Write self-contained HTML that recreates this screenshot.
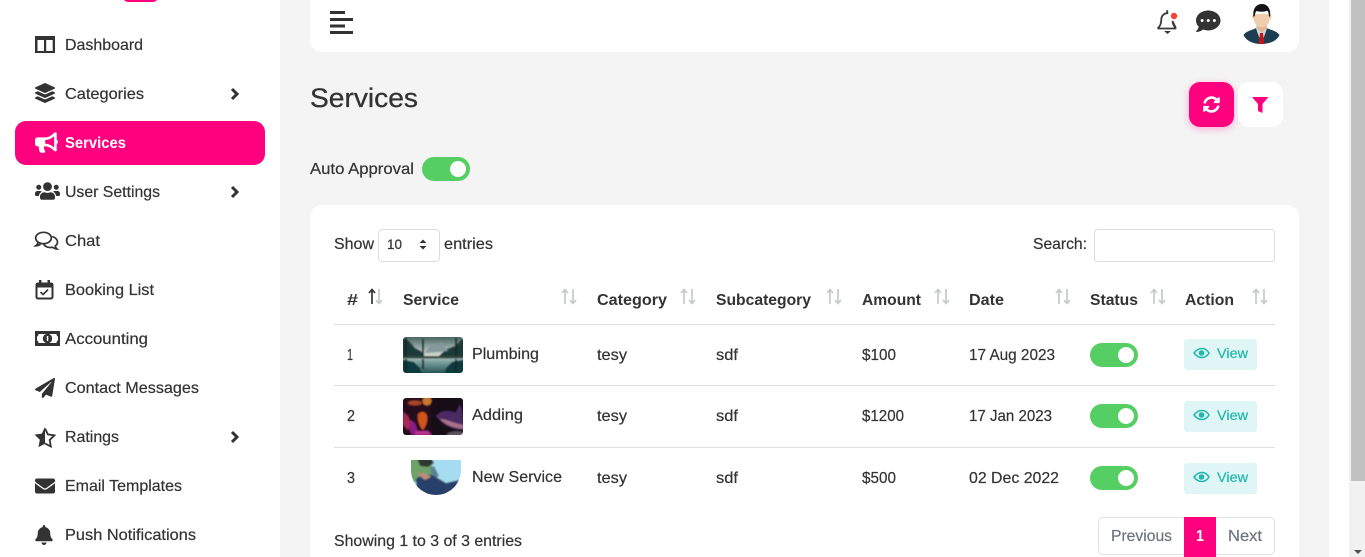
<!DOCTYPE html>
<html><head><meta charset="utf-8"><title>Services</title>
<style>
html,body{margin:0;padding:0;width:1365px;height:557px;overflow:hidden;background:#f4f4f4}
svg{display:block}
text{font-family:"Liberation Sans",sans-serif;font-size:16px;fill:#333;stroke:#333;stroke-width:.2}
.h{font-weight:700;fill:#333;stroke:none}
.p{fill:#6c757d;stroke:#6c757d}
</style></head><body>
<svg width="1365" height="557" viewBox="0 0 1365 557" xmlns="http://www.w3.org/2000/svg">
<defs>
<linearGradient id="lake" x1="0" y1="0" x2="0" y2="1"><stop offset="0" stop-color="#33504f"/><stop offset=".3" stop-color="#8fa5a0"/><stop offset=".5" stop-color="#d4dad0"/><stop offset=".65" stop-color="#7fa5a2"/><stop offset="1" stop-color="#0f3f45"/></linearGradient>
<clipPath id="c1"><rect x="403" y="337" width="60" height="36" rx="3"/></clipPath>
<clipPath id="c2"><rect x="403" y="398" width="60" height="37" rx="3"/></clipPath>
<clipPath id="c3"><path d="M411 460H461V470A25 25 0 0 1 411 470Z"/></clipPath>
<filter id="sh" x="-30%" y="-30%" width="160%" height="160%"><feGaussianBlur stdDeviation="4"/></filter>
<filter id="bl" x="-10%" y="-10%" width="120%" height="120%"><feGaussianBlur stdDeviation=".7"/></filter>
</defs>

<!-- page -->
<rect width="1365" height="557" fill="#f4f4f4"/>
<rect x="1329" width="20" height="557" fill="#fff"/>
<rect x="1349" width="16" height="557" fill="#f1f1f1"/>
<rect x="1351" width="14" height="481" fill="#c1c1c1"/>
<path d="M1354 550h8l-4 4z" fill="#505050"/>

<!-- sidebar -->
<rect width="280" height="557" fill="#fff"/>
<rect x="123" y="-8" width="35" height="10" rx="5" fill="#ff007f"/>
<rect x="15" y="121" width="250" height="44" rx="11" fill="#ff007f"/>

<!-- sidebar icons -->
<g fill="#333">
<path fill-rule="evenodd" d="M35 36h20v17H35zM37.500 40v11h6.500V40zM46.200 40v11h6.500V40z"/>
<svg x="35" y="83" width="20" height="20" viewBox="0 0 512 512"><path d="M12.410 148.020l232.940 105.670c6.800 3.090 14.490 3.090 21.290 0l232.940-105.670c16.550-7.510 16.550-32.520 0-40.030L266.650 2.310a25.607 25.607 0 0 0-21.290 0L12.410 107.980c-16.550 7.510-16.550 32.530 0 40.040zm487.180 88.280l-58.090-26.330-161.640 73.270c-7.560 3.430-15.590 5.170-23.860 5.170s-16.290-1.740-23.860-5.170L70.510 209.970l-58.100 26.330c-16.550 7.500-16.550 32.500 0 40l232.940 105.590c6.800 3.080 14.490 3.080 21.290 0L499.590 276.300c16.550-7.500 16.550-32.500 0-40zm0 127.800l-57.870-26.230-161.860 73.370c-7.560 3.430-15.590 5.170-23.860 5.170s-16.290-1.740-23.860-5.170L70.290 337.870 12.410 364.100c-16.550 7.500-16.550 32.500 0 40l232.940 105.590c6.800 3.080 14.490 3.080 21.290 0L499.590 404.100c16.550-7.500 16.550-32.500 0-40z"/></svg>
<svg x="35" y="132" width="23" height="21" viewBox="0 0 576 512"><path fill="#fff" d="M576 240c0-23.630-12.950-44.040-32-55.120V32.010C544 23.260 537.020 0 512 0c-7.120 0-14.190 2.380-19.980 7.020l-85.030 68.030C364.280 109.190 310.660 128 256 128H64c-35.350 0-64 28.650-64 64v96c0 35.350 28.650 64 64 64h33.700c-1.390 10.480-2.180 21.140-2.180 32 0 39.770 9.260 77.350 25.560 110.940 5.190 10.690 16.520 17.060 28.400 17.060h74.280c26.050 0 41.690-29.840 25.900-50.560-16.400-21.520-26.150-48.360-26.150-77.440 0-11.110 1.620-21.790 4.410-32H256c54.660 0 108.280 18.810 150.980 52.950l85.030 68.030a32.023 32.023 0 0 0 19.980 7.020c24.920 0 32-22.780 32-32V295.130C563.050 284.040 576 263.630 576 240zm-96 141.420l-33.050-26.440C392.950 311.780 325.120 288 256 288v-96c69.120 0 136.950-23.780 190.950-66.980L480 98.580v282.840z"/></svg>
<svg x="35" y="181" width="25" height="20" viewBox="0 0 640 512"><path d="M96 224c35.300 0 64-28.700 64-64s-28.700-64-64-64-64 28.700-64 64 28.700 64 64 64zm448 0c35.300 0 64-28.700 64-64s-28.700-64-64-64-64 28.700-64 64 28.700 64 64 64zm32 32h-64c-17.600 0-33.500 7.100-45.100 18.600 40.300 22.100 68.900 62 75.100 109.400h66c17.700 0 32-14.300 32-32v-32c0-35.300-28.700-64-64-64zm-256 0c61.900 0 112-50.100 112-112S381.900 32 320 32 208 82.100 208 144s50.100 112 112 112zm76.800 32h-8.300c-20.800 10-43.900 16-68.500 16s-47.600-6-68.500-16h-8.300C179.600 288 128 339.600 128 403.200V432c0 26.500 21.500 48 48 48h288c26.500 0 48-21.500 48-48v-28.800c0-63.600-51.600-115.200-115.200-115.200zm-223.700-13.400C161.500 263.100 145.600 256 128 256H64c-35.300 0-64 28.700-64 64v32c0 17.700 14.300 32 32 32h65.900c6.300-47.400 34.900-87.300 75.200-109.400z"/></svg>
<!-- chat outline -->
<g fill="none" stroke="#333" stroke-width="1.700">
<ellipse cx="43.500" cy="238" rx="7.800" ry="5.700" fill="#fff"/>
<path d="M38 242.500c-.3 1.500-1.200 2.500-2.300 3.300 1.800 0 3.500-.6 4.800-1.600"/>
<path d="M52.200 236.500c3.200 1 5.300 3.200 5.300 5.500 0 1.600-.9 3-2.300 4 .2 1.300.9 2.200 1.800 3-1.800-.1-3.300-.8-4.300-1.700-3.500.6-7.300-.4-9-2.800"/>
</g>
<!-- calendar -->
<g fill="none" stroke="#333" stroke-width="2"><rect x="36.500" y="283.500" width="16" height="15" rx="1.500"/></g>
<path d="M36 283h17v4.500H36zM39 280h2.500v4H39zM47.500 280H50v4h-2.500z"/>
<path d="M40.500 292l2.600 2.500 5-5" fill="none" stroke="#333" stroke-width="1.600"/>
<!-- money -->
<path fill-rule="evenodd" d="M35 331h25v15H35zM38.500 334c0 1.500-.8 2.300-1.500 2.500v4c.8.200 1.500 1 1.500 2.500h18c0-1.500.7-2.300 1.500-2.500v-4c-.8-.2-1.500-1-1.500-2.500z"/>
<circle cx="47.500" cy="338.500" r="4.700"/><rect x="46.800" y="336" width="1.500" height="5" fill="#fff"/>
<svg x="35" y="378" width="20" height="20" viewBox="0 0 512 512"><path d="M476 3.200L12.500 270.600c-18.100 10.400-15.800 35.600 2.200 43.200L121 358.400l287.300-253.200c5.500-4.900 13.300 2.600 8.600 8.300L176 407v80.500c0 23.600 28.500 32.900 42.500 15.800L282 426l124.600 52.200c14.200 6 30.400-2.900 33-18.200l72-432C515 7.800 493.300-6.800 476 3.200z"/></svg>
<!-- star half -->
<path d="M45 427l-3.200 6.600-7.300 1 5.300 5.200-1.300 7.300 6.500-3.400z"/>
<path d="M45 428.500l2.900 5.900 6.500 1-4.700 4.600 1.100 6.500-5.800-3" fill="none" stroke="#333" stroke-width="1.800"/>
<svg x="35" y="476" width="20" height="20" viewBox="0 0 512 512"><path d="M502.300 190.800c3.900-3.100 9.700-.2 9.700 4.700V400c0 26.500-21.500 48-48 48H48c-26.500 0-48-21.500-48-48V195.600c0-5 5.700-7.800 9.700-4.700 22.400 17.400 52.100 39.500 154.100 113.600 21.100 15.400 56.700 47.800 92.200 47.600 35.700.3 72-32.800 92.300-47.600 102-74.100 131.600-96.300 154-113.700zM256 320c23.200.4 56.600-29.200 73.400-41.400 132.700-96.300 142.800-104.700 173.400-128.700 5.800-4.500 9.200-11.500 9.200-18.900v-19c0-26.500-21.500-48-48-48H48C21.500 64 0 85.500 0 112v19c0 7.400 3.400 14.300 9.200 18.900 30.600 23.900 40.700 32.400 173.400 128.700 16.800 12.200 50.200 41.800 73.400 41.400z"/></svg>
<svg x="35" y="525" width="18" height="20" viewBox="0 0 448 512"><path d="M224 512c35.320 0 63.970-28.650 63.970-64H160.030c0 35.350 28.650 64 63.970 64zm215.390-149.710c-19.320-20.760-55.470-51.990-55.470-154.290 0-77.700-54.480-139.900-127.940-155.160V32c0-17.670-14.320-32-31.980-32s-31.980 14.330-31.980 32v20.840C118.560 68.100 64.080 130.300 64.080 208c0 102.300-36.150 133.530-55.470 154.290-6 6.450-8.660 14.160-8.610 21.710.11 16.400 12.980 32 32.100 32h383.800c19.120 0 32-15.600 32.100-32 .05-7.550-2.610-15.270-8.610-21.710z"/></svg>
<g fill="none" stroke="#333" stroke-width="3"><path d="M232 89l5 5-5 5"/><path d="M232 187l5 5-5 5"/><path d="M232 432l5 5-5 5"/></g>
</g>

<!-- sidebar labels -->
<text x="65" y="50" textLength="78" lengthAdjust="spacingAndGlyphs">Dashboard</text>
<text x="65" y="99" textLength="79" lengthAdjust="spacingAndGlyphs">Categories</text>
<text x="65" y="148" textLength="61" lengthAdjust="spacingAndGlyphs" font-weight="700" style="fill:#fff;stroke:none">Services</text>
<text x="65" y="197" textLength="95" lengthAdjust="spacingAndGlyphs">User Settings</text>
<text x="65" y="246" textLength="35" lengthAdjust="spacingAndGlyphs">Chat</text>
<text x="65" y="295" textLength="89" lengthAdjust="spacingAndGlyphs">Booking List</text>
<text x="65" y="344" textLength="83" lengthAdjust="spacingAndGlyphs">Accounting</text>
<text x="65" y="393" textLength="134" lengthAdjust="spacingAndGlyphs">Contact Messages</text>
<text x="65" y="442" textLength="54" lengthAdjust="spacingAndGlyphs">Ratings</text>
<text x="65" y="491" textLength="117" lengthAdjust="spacingAndGlyphs">Email Templates</text>
<text x="65" y="540" textLength="131" lengthAdjust="spacingAndGlyphs">Push Notifications</text>

<!-- top bar -->
<path d="M310 0H1299V40A12 12 0 0 1 1287 52H322A12 12 0 0 1 310 40Z" fill="#fff"/>
<g fill="#333"><rect x="330" y="11" width="15" height="3"/><rect x="330" y="18" width="23" height="3"/><rect x="330" y="24.500" width="15" height="3"/><rect x="330" y="31" width="23" height="3"/></g>
<!-- bell outline -->
<path d="M1157.500 28.500c2.300-1.800 3.800-4 3.800-9 0-3.600 2.500-6 5.700-6.300.4 0 .8 0 1.200.1M1172.500 21c.4 3.500 1.900 5.800 3.500 7.500zM1157.500 28.500H1176" fill="none" stroke="#3a3a3a" stroke-width="1.800"/>
<path d="M1167.200 13.200v-3" fill="none" stroke="#3a3a3a" stroke-width="1.800"/>
<path d="M1164 31h7l-3.500 3z" fill="#3a3a3a"/>
<circle cx="1174" cy="16" r="3.200" fill="#f44336"/>
<svg x="1196" y="9" width="24.500" height="24.500" viewBox="0 0 512 512"><path fill="#333" d="M256 32C114.600 32 0 125.100 0 240c0 49.600 21.400 95 57 130.700C44.500 421.100 2.700 466 2.200 466.500c-2.200 2.300-2.800 5.700-1.500 8.700S4.800 480 8 480c66.300 0 116-31.800 140.600-51.400 32.700 12.300 69 19.400 107.400 19.400 141.400 0 256-93.100 256-208S397.400 32 256 32zM128 272c-17.700 0-32-14.300-32-32s14.300-32 32-32 32 14.300 32 32-14.300 32-32 32zm128 0c-17.700 0-32-14.300-32-32s14.300-32 32-32 32 14.300 32 32-14.300 32-32 32zm128 0c-17.700 0-32-14.300-32-32s14.300-32 32-32 32 14.300 32 32-14.300 32-32 32z"/></svg>
<!-- avatar -->
<path d="M1243.500 35c2-3 6-4.500 10-5.800l4-1.700h8l4 1.700c4 1.300 8 2.800 10 5.800-2.500 5.500-9 9-18 9s-15.500-3.500-18-9z" fill="#1c3d52"/>
<path d="M1255.500 27l6 17 6-17-2-3h-8z" fill="#d3d6d7"/>
<path d="M1260 33h3l1.200 11h-5.400z" fill="#c4161c"/>
<path d="M1257 21h9.500v7l-4.700 5-4.800-5z" fill="#e2b48f"/>
<ellipse cx="1253.500" cy="17" rx="1.300" ry="2.200" fill="#eec5a4"/><ellipse cx="1270" cy="17" rx="1.300" ry="2.200" fill="#eec5a4"/>
<path d="M1254 14h15.500v6c0 3.500-4 7.500-7.750 7.500S1254 23.500 1254 20z" fill="#f0cdaf"/>
<path d="M1253.500 17c-1.200-8 2.500-13 8.300-13s9.500 5 8.200 13l-1.100-1c0-2-.5-4-1.500-5.200-3.500 1.200-7.500 1.200-11 .2-1 1.200-1.500 3-1.600 5z" fill="#141414"/>

<!-- title -->
<text x="310" y="107" textLength="108" lengthAdjust="spacingAndGlyphs" style="font-size:27px;stroke-width:.3">Services</text>
<rect x="1189" y="84" width="45" height="45" rx="11" fill="#ff007f" opacity=".3" filter="url(#sh)"/>
<rect x="1189" y="82" width="45" height="45" rx="11" fill="#ff007f"/>
<rect x="1238" y="82" width="45" height="45" rx="11" fill="#fff"/>
<svg x="1203" y="96" width="17" height="17" viewBox="0 0 512 512"><path fill="#fff" d="M370.720 133.280C339.458 104.008 298.888 87.962 255.848 88c-77.458.068-144.328 53.178-162.791 126.850-1.344 5.363-6.122 9.150-11.651 9.150H24.103c-7.498 0-13.194-6.807-11.807-14.176C33.933 94.924 134.813 8 256 8c66.448 0 126.791 26.136 171.315 68.685L463.030 40.970C478.149 25.851 504 36.559 504 57.941V192c0 13.255-10.745 24-24 24H345.941c-21.382 0-32.090-25.851-16.971-40.971l41.750-41.749zM32 296h134.059c21.382 0 32.090 25.851 16.971 40.971l-41.750 41.750c31.262 29.273 71.835 45.319 114.876 45.280 77.418-.07 144.315-53.144 162.787-126.849 1.344-5.363 6.122-9.150 11.651-9.150h57.304c7.498 0 13.194 6.807 11.807 14.176C478.067 417.076 377.187 504 256 504c-66.448 0-126.791-26.136-171.315-68.685L48.970 471.030C33.851 486.149 8 475.441 8 454.059V320c0-13.255 10.745-24 24-24z"/></svg>
<path d="M1252 97h16.500l-6 7v9l-4.500-2v-7z" fill="#ff007f"/>

<!-- auto approval -->
<text x="310" y="174" textLength="104" lengthAdjust="spacingAndGlyphs">Auto Approval</text>
<rect x="422" y="157" width="48" height="24" rx="12" fill="#55ce63"/><circle cx="458" cy="169" r="8" fill="#fff"/>

<!-- card -->
<path d="M322 205H1287A12 12 0 0 1 1299 217V557H310V217A12 12 0 0 1 322 205Z" fill="#fff"/>
<text x="334" y="249" textLength="40" lengthAdjust="spacingAndGlyphs">Show</text>
<rect x="378.500" y="229.500" width="61" height="32" rx="4" fill="#fff" stroke="#dcdcdc"/>
<text x="387" y="249" textLength="15" lengthAdjust="spacingAndGlyphs" style="font-size:14px">10</text>
<path d="M419.500 243l3.500-3.500 3.500 3.500zM419.500 246l3.500 3.500 3.500-3.500z" fill="#333"/>
<text x="444" y="249" textLength="49" lengthAdjust="spacingAndGlyphs">entries</text>
<text x="1033" y="249" textLength="54" lengthAdjust="spacingAndGlyphs">Search:</text>
<rect x="1094.500" y="229.500" width="180" height="32" rx="3" fill="#fff" stroke="#dcdcdc"/>

<!-- table head -->
<text x="347" y="305" class="h" textLength="11" lengthAdjust="spacingAndGlyphs">#</text>
<text x="403" y="305" class="h" textLength="56" lengthAdjust="spacingAndGlyphs">Service</text>
<text x="597" y="305" class="h" textLength="70" lengthAdjust="spacingAndGlyphs">Category</text>
<text x="716" y="305" class="h" textLength="95" lengthAdjust="spacingAndGlyphs">Subcategory</text>
<text x="862" y="305" class="h" textLength="59" lengthAdjust="spacingAndGlyphs">Amount</text>
<text x="969" y="305" class="h" textLength="35" lengthAdjust="spacingAndGlyphs">Date</text>
<text x="1090" y="305" class="h" textLength="48" lengthAdjust="spacingAndGlyphs">Status</text>
<text x="1185" y="305" class="h" textLength="49" lengthAdjust="spacingAndGlyphs">Action</text>

<!-- sort arrows -->
<g fill="none" stroke-width="1.700">
<g stroke="#333"><path d="M372 304v-14M369 293l3-3.500 3 3.500"/></g>
<g stroke="#c6c9cc">
<path d="M379 289v14M376 300l3 3.500 3-3.500"/>
<g id="sa"><path d="M565 304v-14M562 293l3-3.500 3 3.500M573 289v14M570 300l3 3.500 3-3.500"/></g>
<use href="#sa" x="119"/><use href="#sa" x="265"/><use href="#sa" x="373"/><use href="#sa" x="494"/><use href="#sa" x="589"/><use href="#sa" x="691"/>
</g></g>

<!-- rows lines -->
<g fill="#e0e0e3"><rect x="334" y="324" width="941" height="1"/><rect x="334" y="385" width="941" height="1"/><rect x="334" y="447" width="941" height="1"/></g>

<!-- thumbnail 1 -->
<g clip-path="url(#c1)"><g filter="url(#bl)">
<rect x="400" y="334" width="66" height="42" fill="url(#lake)"/>
<path d="M400 338l6 1 4 3 5 6 6 3 3 5H400zM466 338l-5 2-6 6-8 3-5 4-3 3H466z" fill="#1f3a38"/>
<path d="M425 353l6-8 5 1 5-4 7 9z" fill="#84999c"/>
<path d="M405 338h2v18h-2zM422 339h2v17h-2zM455 338h2v18h-2z" fill="#16282a"/>
<path d="M400 356h66v2.500H400z" fill="#33453c"/>
<path d="M400 359l14 3 6 6 2 8H400zM466 359l-14 3-6 6-2 8H466z" fill="#0f3a40"/>
<path d="M405 359h2v12h-2zM422 359h2v10h-2zM455 359h2v12h-2z" fill="#16282a"/>
</g></g>
<!-- thumbnail 2 -->
<g clip-path="url(#c2)"><g filter="url(#bl)">
<rect x="400" y="395" width="66" height="43" fill="#161018"/>
<rect x="400" y="395" width="31" height="43" fill="#26101c"/>
<ellipse cx="427" cy="401" rx="4.500" ry="4.500" fill="#c9742c"/>
<ellipse cx="415" cy="403" rx="7" ry="2.500" fill="#a8442c"/>
<path d="M418 414c4-4 8-2 9 2 1 5-1 10-4 14-3-2-6-10-5-16z" fill="#d0541a"/>
<path d="M403 412l5 4 3 8-3 6-5-5z" fill="#a82a50"/>
<path d="M410 420l5 3 3 9-6 3-3-6z" fill="#8d1f82"/>
<path d="M416 431l12 0 4 4h-18z" fill="#b83090"/>
<path d="M436 416c5-6 14-6 19-3 3-2 3-7 5-8 3 6 3 16 3 24-8 2-19-3-27-13z" fill="#4c2964"/>
<path d="M440 419c6 0 13 4 23 6v4c-9-1-18-4-23-10z" fill="#a9728a"/>
<path d="M447 434c3-3 10-3 16-2v5h-16z" fill="#5a5560"/>
</g></g>
<!-- thumbnail 3 -->
<g clip-path="url(#c3)"><g filter="url(#bl)">
<rect x="408" y="458" width="56" height="40" fill="#a5dcf0"/>
<rect x="408" y="458" width="24" height="24" fill="#6ea268"/>
<path d="M417 458h14l3 5-6 4-8-1z" fill="#2d3730"/>
<path d="M430 468l4-2 5 10-6 3z" fill="#5b8290"/>
<path d="M416 479c6-5 14-6 20-2l10 6 13-3-6 16h-36z" fill="#27406a"/>
<path d="M417 474c5-2 10-1 14 3l-6 3z" fill="#b98d78"/>
<path d="M412 484l8 10h-8z" fill="#c8c8cc"/>
</g></g>

<!-- rows -->
<text x="347" y="360" textLength="6" lengthAdjust="spacingAndGlyphs">1</text>
<text x="347" y="421" textLength="8" lengthAdjust="spacingAndGlyphs">2</text>
<text x="347" y="483" textLength="8" lengthAdjust="spacingAndGlyphs">3</text>
<text x="472" y="359" textLength="67" lengthAdjust="spacingAndGlyphs">Plumbing</text>
<text x="472" y="420" textLength="51" lengthAdjust="spacingAndGlyphs">Adding</text>
<text x="472" y="482" textLength="90" lengthAdjust="spacingAndGlyphs">New Service</text>
<text x="597" y="360" textLength="30" lengthAdjust="spacingAndGlyphs">tesy</text>
<text x="597" y="421" textLength="30" lengthAdjust="spacingAndGlyphs">tesy</text>
<text x="597" y="483" textLength="30" lengthAdjust="spacingAndGlyphs">tesy</text>
<text x="716" y="360" textLength="22" lengthAdjust="spacingAndGlyphs">sdf</text>
<text x="716" y="421" textLength="22" lengthAdjust="spacingAndGlyphs">sdf</text>
<text x="716" y="483" textLength="22" lengthAdjust="spacingAndGlyphs">sdf</text>
<text x="862" y="360" textLength="34" lengthAdjust="spacingAndGlyphs">$100</text>
<text x="862" y="421" textLength="42" lengthAdjust="spacingAndGlyphs">$1200</text>
<text x="862" y="483" textLength="34" lengthAdjust="spacingAndGlyphs">$500</text>
<text x="969" y="360" textLength="86" lengthAdjust="spacingAndGlyphs">17 Aug 2023</text>
<text x="969" y="421" textLength="83" lengthAdjust="spacingAndGlyphs">17 Jan 2023</text>
<text x="969" y="483" textLength="90" lengthAdjust="spacingAndGlyphs">02 Dec 2022</text>

<!-- toggles -->
<rect x="1090" y="343" width="48" height="24" rx="12" fill="#55ce63"/><circle cx="1126" cy="355" r="8" fill="#fff"/>
<rect x="1090" y="404" width="48" height="24" rx="12" fill="#55ce63"/><circle cx="1126" cy="416" r="8" fill="#fff"/>
<rect x="1090" y="466" width="48" height="24" rx="12" fill="#55ce63"/><circle cx="1126" cy="478" r="8" fill="#fff"/>

<!-- view buttons -->
<g id="vb">
<rect x="1184" y="339" width="73" height="31" rx="3" fill="#e0f5f6"/>
<path d="M1194 353c4.500-6 11.500-6 15 0-3.500 6-10.500 6-15 0z" fill="none" stroke="#1fb8ab" stroke-width="1.500"/>
<circle cx="1201.500" cy="353" r="2.800" fill="#1fb8ab"/>
<text x="1217" y="358" textLength="31" lengthAdjust="spacingAndGlyphs" style="font-size:14px;fill:#1fb8ab;stroke:#1fb8ab">View</text>
</g>
<use href="#vb" y="62"/><use href="#vb" y="124"/>

<!-- footer -->
<text x="334" y="546" textLength="188" lengthAdjust="spacingAndGlyphs">Showing 1 to 3 of 3 entries</text>
<rect x="1098.500" y="517.500" width="176" height="37" rx="4" fill="#fff" stroke="#dee2e6"/>
<rect x="1184" y="517" width="32" height="40" fill="#ff007f"/>
<text x="1111" y="541" class="p" textLength="61" lengthAdjust="spacingAndGlyphs">Previous</text>
<text x="1196" y="541" textLength="8" lengthAdjust="spacingAndGlyphs" font-weight="700" style="fill:#fff;stroke:none">1</text>
<text x="1228" y="541" class="p" textLength="34" lengthAdjust="spacingAndGlyphs">Next</text>
</svg>
</body></html>
